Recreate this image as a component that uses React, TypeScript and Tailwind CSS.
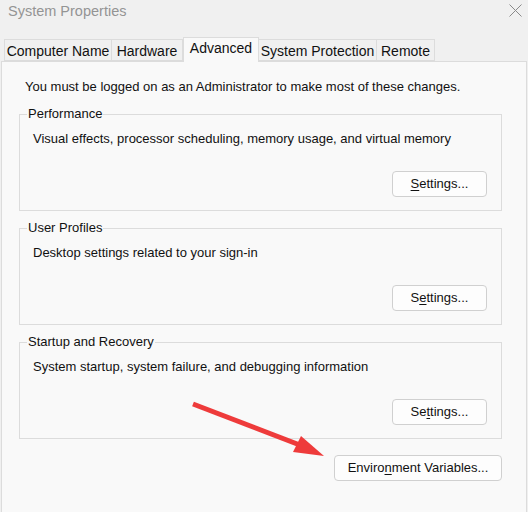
import React from 'react';

const tabs = [
  { label: 'Computer Name', width: 'w-[108px]' },
  { label: 'Hardware', width: 'w-[71px]' },
  { label: 'Advanced', width: 'w-[76px]', active: true },
  { label: 'System Protection', width: 'w-[118px]' },
  { label: 'Remote', width: 'w-[58px]' }
];

// Settings label with the accelerator letter underlined
const AccelLabel: React.FC<{ text: string; index: number }> = ({ text, index }) => (
  <span>
    {text.slice(0, index)}
    <span className="underline underline-offset-2">{text[index]}</span>
    {text.slice(index + 1)}
  </span>
);

interface GroupProps {
  title: string;
  description: string;
  accel: number;
  first?: boolean;
}

const GroupBox: React.FC<GroupProps> = ({ title, description, accel, first }) => (
  <fieldset
    className={`ml-[17px] mr-[24px] border border-[#dcdcdc] pl-[7px] pr-[14px] pb-[13px] ${first ? 'mt-[11px]' : 'mt-[9px]'}`}
  >
    <legend className="px-[1px] leading-[16px]">{title}</legend>
    <p className="mt-[9px] pl-[6px] leading-[16px]">{description}</p>
    <div className="mt-[24px] flex justify-end">
      <button className="w-[95px] h-[26px] rounded-[4px] border border-[#d0d0d0] bg-[#fdfdfd] text-[13px] leading-[16px]">
        <AccelLabel text="Settings..." index={accel} />
      </button>
    </div>
  </fieldset>
);

const App: React.FC = () => {
  return (
    <div className="relative w-[528px] h-[512px] overflow-hidden bg-[#f0f0f0] font-['Liberation_Sans',Arial,sans-serif] text-[13px] text-[#111]">
      {/* Title bar */}
      <div className="flex h-[36px] items-start justify-between">
        <span className="pl-[8px] pt-[2px] text-[14.5px] leading-[18px] text-[#949494]">
          System Properties
        </span>
        <svg className="mr-[6px] mt-[4px]" width="13" height="13" viewBox="0 0 13 13">
          <path d="M0.5 0.5 L12.5 12.5 M12.5 0.5 L0.5 12.5" stroke="#8a8a8a" strokeWidth="1" fill="none" />
        </svg>
      </div>

      {/* Tabs */}
      <div className="flex items-end pl-[4px] h-[25px] relative z-10">
        {tabs.map((tab) =>
          tab.active ? (
            <div
              key={tab.label}
              className={`${tab.width} h-[25px] -mb-[1px] border border-b-0 border-[#dcdcdc] bg-[#f9f9f9] text-center leading-[20px] text-[14px]`}
            >
              {tab.label}
            </div>
          ) : (
            <div
              key={tab.label}
              className={`${tab.width} h-[22px] border border-l-0 first:border-l border-[#dcdcdc] bg-[#f0f0f0] text-center leading-[22px] text-[14px]`}
            >
              {tab.label}
            </div>
          )
        )}
      </div>

      {/* Panel */}
      <div className="mx-[1px] h-[470px] border border-[#dcdcdc] bg-[#f9f9f9]">
        <p className="pl-[23px] pt-[17px] leading-[16px]">
          You must be logged on as an Administrator to make most of these changes.
        </p>

        <GroupBox
          first
          title="Performance"
          description="Visual effects, processor scheduling, memory usage, and virtual memory"
          accel={0}
        />
        <GroupBox
          title="User Profiles"
          description="Desktop settings related to your sign-in"
          accel={1}
        />
        <GroupBox
          title="Startup and Recovery"
          description="System startup, system failure, and debugging information"
          accel={2}
        />

        <div className="mt-[16px] mr-[24px] flex justify-end">
          <button className="w-[168px] h-[26px] rounded-[4px] border border-[#d0d0d0] bg-[#fdfdfd] text-[13px] leading-[16px]">
            <AccelLabel text="Environment Variables..." index={6} />
          </button>
        </div>
      </div>

      {/* Red annotation arrow */}
      <svg className="absolute left-0 top-0 pointer-events-none" width="528" height="512" viewBox="0 0 528 512">
        <line x1="193" y1="404" x2="305" y2="447" stroke="#ee3b3b" strokeWidth="5" />
        <polygon points="324,456 301,436 293,452" fill="#ee3b3b" />
      </svg>
    </div>
  );
};

export default App;
